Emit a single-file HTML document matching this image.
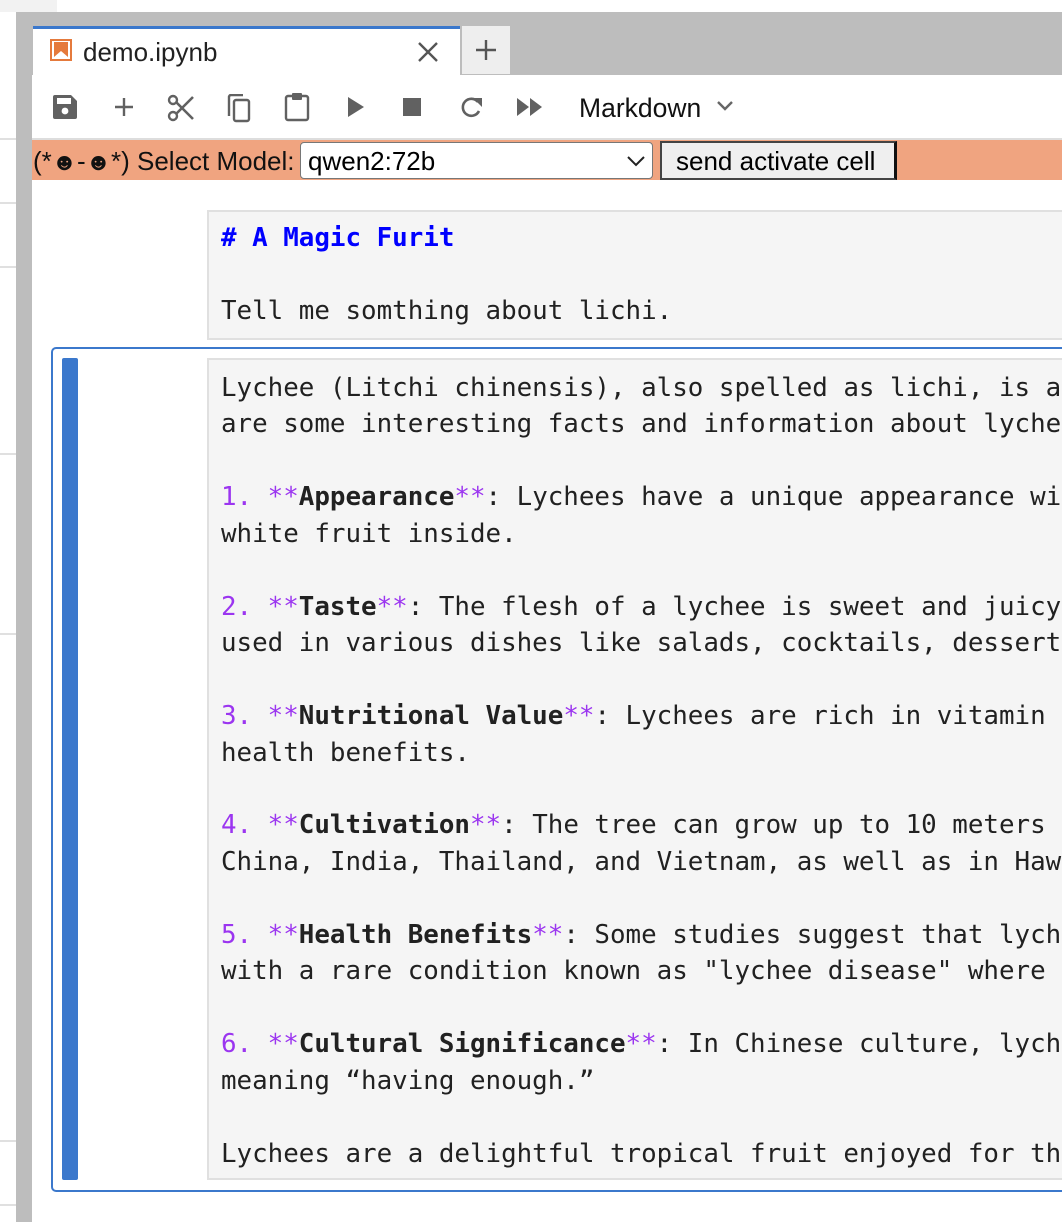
<!DOCTYPE html>
<html><head><meta charset="utf-8"><style>
*{margin:0;padding:0;box-sizing:border-box}
body{width:1062px;height:1222px;overflow:hidden;background:#fff;position:relative;font-family:"Liberation Sans",sans-serif}
.a{position:absolute}
.hl{position:absolute;left:0;width:16px;height:2px;background:#e0e0e0}
.mono{font-family:"DejaVu Sans Mono","Liberation Mono",monospace;font-size:25.85px;line-height:36.45px;white-space:pre;color:#212121}
.p{color:#9b35f0}
.b{font-weight:bold}
.ic{position:absolute;top:94px}
.t{font-size:26px;line-height:30px;white-space:nowrap}
</style></head><body>
<div class="a" style="left:0;top:0;width:57px;height:12px;background:#f2f2f2"></div>
<div class="hl" style="top:138px"></div>
<div class="hl" style="top:202px"></div>
<div class="hl" style="top:266px"></div>
<div class="hl" style="top:453px"></div>
<div class="hl" style="top:633px"></div>
<div class="hl" style="top:1140px"></div>
<div class="hl" style="top:1204px"></div>
<div class="a" style="left:16px;top:12px;width:1046px;height:63px;background:#bdbdbd"></div>
<div class="a" style="left:16px;top:12px;width:16px;height:1210px;background:#bdbdbd"></div>
<!-- tab -->
<div class="a" style="left:33px;top:26px;width:427px;height:49px;background:#fff;border-top:3px solid #3b78cc"></div>
<div class="a" style="left:50px;top:39px;width:22px;height:22px;border:2px solid #e57a3c;background:#fff">
<svg width="18" height="18" style="position:absolute;left:0;top:0"><path d="M2 1H16V16L9 10L2 16Z" fill="#e57a3c"/></svg></div>
<div class="a t" style="left:83px;top:37px;color:#212121">demo.ipynb</div>
<svg class="a" style="left:416px;top:40px" width="24" height="24"><path d="M3 3L21 21M21 3L3 21" stroke="#555" stroke-width="2.4"/></svg>
<div class="a" style="left:462px;top:26px;width:48px;height:48px;background:#eee"></div>
<svg class="a" style="left:474px;top:38px" width="24" height="24"><path d="M12 2V22M2 12H22" stroke="#555" stroke-width="2.4"/></svg>
<!-- toolbar -->
<div class="a" style="left:32px;top:75px;width:1030px;height:63px;background:#fff"></div>
<svg class="ic" style="left:52px" width="26" height="26"><path d="M1 3a2 2 0 0 1 2-2H19L25 7V23a2 2 0 0 1-2 2H3a2 2 0 0 1-2-2Z" fill="#616161"/><rect x="5" y="4" width="14" height="6" fill="#fff"/><circle cx="13" cy="17" r="3.4" fill="#fff"/></svg>
<svg class="ic" style="left:111px" width="26" height="26"><path d="M13 4V22M4 13H22" stroke="#616161" stroke-width="2.4"/></svg>
<svg class="ic" style="left:167px" width="28" height="28"><circle cx="6" cy="22" r="4" fill="none" stroke="#616161" stroke-width="2.4"/><circle cx="6" cy="6" r="4" fill="none" stroke="#616161" stroke-width="2.4"/><path d="M9 8L26 25M9 20L26 3" stroke="#616161" stroke-width="2.6"/></svg>
<svg class="ic" style="left:226px" width="26" height="30"><path d="M3 22V3a2 2 0 0 1 2-2H17" fill="none" stroke="#616161" stroke-width="2.4"/><rect x="8" y="6" width="15" height="21" rx="2" fill="none" stroke="#616161" stroke-width="2.4"/></svg>
<svg class="ic" style="left:284px;top:92px" width="26" height="30"><rect x="2" y="4" width="22" height="24" rx="2" fill="none" stroke="#616161" stroke-width="2.4"/><rect x="8" y="1" width="10" height="7" rx="1" fill="#616161"/></svg>
<svg class="ic" style="left:346px;top:96px" width="20" height="22"><path d="M2 1L18 11L2 21Z" fill="#616161"/></svg>
<svg class="ic" style="left:403px;top:98px" width="18" height="18"><rect width="18" height="18" fill="#616161"/></svg>
<svg class="ic" style="left:459px;top:95px" width="26" height="26"><path d="M20 16A8.5 8.5 0 1 1 19 7" fill="none" stroke="#616161" stroke-width="2.6"/><path d="M14 3L23 3L23 12Z" fill="#616161"/></svg>
<svg class="ic" style="left:516px;top:97px" width="28" height="20"><path d="M1 1L13 10L1 19ZM14 1L26 10L14 19Z" fill="#616161"/></svg>
<div class="a t" style="left:579px;top:93px;color:#111;font-size:26.5px">Markdown</div>
<svg class="a" style="left:716px;top:100px" width="18" height="12"><path d="M2 2L9 9L16 2" fill="none" stroke="#666" stroke-width="2.4"/></svg>
<div class="a" style="left:32px;top:138px;width:1030px;height:2px;background:#ddd"></div>
<!-- orange bar -->
<div class="a" style="left:32px;top:140px;width:1030px;height:40px;background:#f0a480"></div>
<div class="a t" style="left:33px;top:146px;color:#111">(*<span style="font-size:24px">☻</span>-<span style="font-size:24px">☻</span>*) Select Model:</div>
<div class="a" style="left:300px;top:142px;width:353px;height:37px;background:#fff;border:1px solid #777;border-radius:4px"></div>
<div class="a t" style="left:308px;top:146px;color:#000">qwen2:72b</div>
<svg class="a" style="left:626px;top:155px" width="20" height="12"><path d="M2 2L10 10L18 2" fill="none" stroke="#222" stroke-width="2"/></svg>
<div class="a" style="left:660px;top:141px;width:237px;height:39px;background:#efefef;border:2px solid #444;border-right:3px solid #111"></div>
<div class="a t" style="left:676px;top:146px;color:#000">send activate cell</div>
<!-- cell 1 -->
<div class="a mono" style="left:207px;top:210px;width:870px;height:130px;background:#f5f5f5;border:2px solid #e0e0e0;padding:8px 0 0 12px"><span class="b" style="color:#0000ff"># A Magic Furit</span>

Tell me somthing about lichi.</div>
<!-- cell 2 -->
<div class="a" style="left:51px;top:347px;width:1030px;height:845px;border:2px solid #3b78cc;border-radius:5px"></div>
<div class="a" style="left:62px;top:358px;width:16px;height:822px;background:#3b78cc;border-radius:2px"></div>
<div class="a mono" style="left:207px;top:358px;width:870px;height:822px;background:#f5f5f5;border:2px solid #e0e0e0;padding:10px 0 0 12px;overflow:hidden">Lychee (Litchi chinensis), also spelled as lichi, is a tropical fruit
are some interesting facts and information about lychees:

<span class="p">1. **</span><span class="b">Appearance</span><span class="p">**</span>: Lychees have a unique appearance with rough red
white fruit inside.

<span class="p">2. **</span><span class="b">Taste</span><span class="p">**</span>: The flesh of a lychee is sweet and juicy, with
used in various dishes like salads, cocktails, desserts,

<span class="p">3. **</span><span class="b">Nutritional Value</span><span class="p">**</span>: Lychees are rich in vitamin C and
health benefits.

<span class="p">4. **</span><span class="b">Cultivation</span><span class="p">**</span>: The tree can grow up to 10 meters tall
China, India, Thailand, and Vietnam, as well as in Hawaii

<span class="p">5. **</span><span class="b">Health Benefits</span><span class="p">**</span>: Some studies suggest that lychees
with a rare condition known as "lychee disease" where low

<span class="p">6. **</span><span class="b">Cultural Significance</span><span class="p">**</span>: In Chinese culture, lychees
meaning “having enough.”

Lychees are a delightful tropical fruit enjoyed for their</div>
</body></html>
